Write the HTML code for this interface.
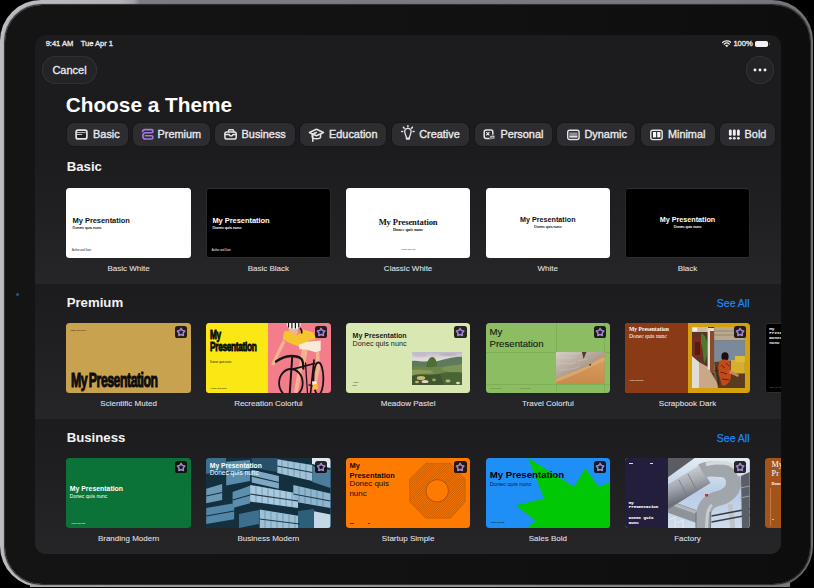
<!DOCTYPE html>
<html><head><meta charset="utf-8">
<style>
*{margin:0;padding:0;box-sizing:border-box}
html,body{width:814px;height:588px;overflow:hidden;background:#000}
body{position:relative;font-family:"Liberation Sans",sans-serif;color:#fff}
.a{position:absolute}
.t{position:absolute;line-height:1;white-space:nowrap}
#frame{left:0.3px;top:0.3px;width:813px;height:586.5px;border-radius:41px;background:linear-gradient(90deg,#bcbcc1 0px,#b4b4b9 120px,#a0a0a5 134px,#7c7c82 140px,#78787e 700px,#727277 100%)}
#bezel{left:4.6px;top:4.6px;width:805px;height:579.7px;border-radius:37px;background:linear-gradient(90deg,#141414,#111 60%,#0d0d0d);box-shadow:0 0 1px 0.6px #2a2a2a}
#screen{left:34.5px;top:35px;width:746.5px;height:519px;border-radius:11px;background:#1c1c1e;overflow:hidden}
.sec{position:absolute;left:0;width:100%;height:135px;background:linear-gradient(180deg,#1c1c1e 0%,#1f1f21 40%,#262628 100%)}
.chip{position:absolute;top:88px;height:22.8px;border-radius:7px;background:#2d2d31;box-shadow:0 0 1px 1px rgba(0,0,0,0.18)}
.ct{font-size:10.9px;font-weight:400;color:#e8e8ea;top:93.6px;-webkit-text-stroke:0.35px #e8e8ea}
.hd{font-size:13.2px;font-weight:700;color:#f2f2f2}
.card{position:absolute;width:124.4px;height:70px;border-radius:3.5px;overflow:hidden}
.lbl{position:absolute;width:140px;text-align:center;font-size:8px;line-height:1;color:#dedee0;white-space:nowrap;-webkit-text-stroke:0.12px #dedee0}
.badge{position:absolute;left:108.5px;top:3.5px;width:12.2px;height:12.2px;border-radius:2.6px;background:rgba(12,10,8,0.88)}
.badge svg{position:absolute;left:0;top:0}
.cond{font-weight:700;transform-origin:0 0}
.see{font-size:10.5px;color:#1a86f5;-webkit-text-stroke:0.25px #1a86f5}
</style></head><body>
<div id="frame" class="a"></div>
<div class="a" style="left:30px;top:583px;width:760px;height:3.6px;background:linear-gradient(90deg,#a8a8ad,#96969b 60%,#7a7a7f)"></div>
<div id="bezel" class="a"></div>
<div class="a" style="left:16px;top:292.5px;width:3px;height:3px;border-radius:50%;background:#2a4f8a"></div>
<div id="screen" class="a">
  <!-- sections -->
  <div class="sec" style="top:114.4px"></div>
  <div class="sec" style="top:249.4px"></div>
  <div class="sec" style="top:384.3px"></div>

  <!-- status bar -->
  <div class="t" style="left:11.2px;top:4.5px;font-size:7.6px;font-weight:400;color:#ececec;-webkit-text-stroke:0.3px #ececec;letter-spacing:-0.05px">9:41 AM</div>
  <div class="t" style="left:46.3px;top:4.5px;font-size:7.6px;font-weight:400;color:#ececec;-webkit-text-stroke:0.3px #ececec;letter-spacing:-0.05px">Tue Apr 1</div>
  <div class="t" style="left:698.9px;top:4.5px;font-size:7.6px;font-weight:400;color:#ececec;-webkit-text-stroke:0.3px #ececec;letter-spacing:-0.05px">100%</div>
  <svg class="a" style="left:687.3px;top:5.2px" width="9.5" height="7.2" viewBox="0 0 9.5 7.2">
    <path d="M0.5 2.5 A6.3 6.3 0 0 1 9 2.5" stroke="#eee" stroke-width="1.2" fill="none" stroke-linecap="round"/>
    <path d="M2.1 4.2 A3.9 3.9 0 0 1 7.4 4.2" stroke="#eee" stroke-width="1.2" fill="none" stroke-linecap="round"/>
    <path d="M3.4 5.6 A1.9 1.9 0 0 1 6.1 5.6 L4.75 7 Z" fill="#eee" stroke="#eee" stroke-width="0.5" stroke-linejoin="round"/>
  </svg>
  <div class="a" style="left:720.3px;top:5.7px;width:13.2px;height:6px;border-radius:1.8px;background:#f2f2f2"></div>
  <div class="a" style="left:734.2px;top:7.5px;width:1.3px;height:2.4px;border-radius:0 1px 1px 0;background:#777"></div>
  <!-- cancel -->
  <div class="a" style="left:7.5px;top:21px;width:55px;height:28px;border-radius:14px;background:#242426;box-shadow:inset 0 0 0 0.8px #343437"></div>
  <div class="t" style="left:17.9px;top:29.9px;font-size:11px;color:#ebebed;-webkit-text-stroke:0.3px #ebebed">Cancel</div>
  <!-- more -->
  <div class="a" style="left:711.2px;top:20.8px;width:28px;height:28px;border-radius:50%;background:#242426;box-shadow:inset 0 0 0 0.8px #343437"></div>
  <svg class="a" style="left:711.2px;top:20.8px" width="28" height="28" viewBox="0 0 28 28"><circle cx="9" cy="14" r="1.45" fill="#f2f2f2"/><circle cx="14" cy="14" r="1.45" fill="#f2f2f2"/><circle cx="19" cy="14" r="1.45" fill="#f2f2f2"/></svg>
  <!-- title -->
  <div class="t" style="left:31.2px;top:59.5px;font-size:20.8px;font-weight:700;color:#fff">Choose a Theme</div>
  <!-- chips -->
  <div class="chip" style="left:32.5px;width:60.7px"></div>
  <div class="chip" style="left:98.7px;width:76.7px"></div>
  <div class="chip" style="left:180.5px;width:79.6px"></div>
  <div class="chip" style="left:265.7px;width:86.3px"></div>
  <div class="chip" style="left:357.3px;width:76.9px"></div>
  <div class="chip" style="left:440.2px;width:77.1px"></div>
  <div class="chip" style="left:522.8px;width:77.8px"></div>
  <div class="chip" style="left:606.5px;width:73.5px"></div>
  <div class="chip" style="left:685.5px;width:54.6px"></div>
  <div id="chiptext">
  <div class="t ct" style="left:58.6px">Basic</div>
  <div class="t ct" style="left:123.1px">Premium</div>
  <div class="t ct" style="left:207.1px">Business</div>
  <div class="t ct" style="left:294.5px">Education</div>
  <div class="t ct" style="left:384.7px">Creative</div>
  <div class="t ct" style="left:465.9px">Personal</div>
  <div class="t ct" style="left:550px">Dynamic</div>
  <div class="t ct" style="left:633.4px">Minimal</div>
  <div class="t ct" style="left:710.1px">Bold</div>
  </div>
  <!-- headers -->
  <div class="t hd" style="left:32.2px;top:125.3px">Basic</div>
  <div class="t hd" style="left:32.2px;top:260.5px">Premium</div>
  <div class="t hd" style="left:32.2px;top:395.5px">Business</div>
  <div class="t see" style="left:682.3px;top:263px">See All</div>
  <div class="t see" style="left:682.3px;top:398px">See All</div>
  <!-- cards -->
  <!-- Basic row -->
  <div class="card" style="left:31.9px;top:152.7px;background:#fff;color:#111">
    <div class="t" style="left:6.2px;top:29px;font-size:7.5px;font-weight:700;letter-spacing:-0.05px">My Presentation</div>
    <div class="t" style="left:6.2px;top:38.8px;font-size:3.9px;-webkit-text-stroke:0.1px currentColor">Donec quis nunc</div>
    <div class="t" style="left:5.6px;top:61.9px;font-size:2.6px">Author and Date</div>
  </div>
  <div class="card" style="left:171.7px;top:152.7px;background:#000;color:#fff;box-shadow:inset 0 0 0 0.9px #2f2f31">
    <div class="t" style="left:6.2px;top:29px;font-size:7.5px;font-weight:700;letter-spacing:-0.05px">My Presentation</div>
    <div class="t" style="left:6.2px;top:38.8px;font-size:3.9px;-webkit-text-stroke:0.1px currentColor">Donec quis nunc</div>
    <div class="t" style="left:5.6px;top:61.9px;font-size:2.6px">Author and Date</div>
  </div>
  <div class="card" style="left:311.4px;top:152.7px;background:#fff;color:#111;font-family:'Liberation Serif',serif">
    <div class="t" style="left:0;width:124.4px;text-align:center;top:30.7px;font-size:8.56px;font-weight:700;letter-spacing:-0.1px">My Presentation</div>
    <div class="t" style="left:0;width:124.4px;text-align:center;top:39.9px;font-size:4.3px;font-weight:700">Donec quis nunc</div>
    <div class="t" style="left:0;width:124.4px;text-align:center;top:61.5px;font-size:2.4px">Author and Date</div>
  </div>
  <div class="card" style="left:451.1px;top:152.7px;background:#fff;color:#111">
    <div class="t" style="left:0;width:124.4px;text-align:center;top:28.3px;font-size:7.2px;font-weight:700">My Presentation</div>
    <div class="t" style="left:0;width:124.4px;text-align:center;top:38px;font-size:3.7px;-webkit-text-stroke:0.1px currentColor">Donec quis nunc</div>
  </div>
  <div class="card" style="left:590.8px;top:152.7px;background:#000;color:#fff;box-shadow:inset 0 0 0 0.9px #2f2f31">
    <div class="t" style="left:0;width:124.4px;text-align:center;top:28.3px;font-size:7.2px;font-weight:700">My Presentation</div>
    <div class="t" style="left:0;width:124.4px;text-align:center;top:38px;font-size:3.7px;-webkit-text-stroke:0.1px currentColor">Donec quis nunc</div>
  </div>

  <!-- Premium row -->
  <div class="card" style="left:31.9px;top:287.7px;background:#c9a24f;color:#111">
    <div class="t" style="left:4.3px;top:6.2px;font-size:2.1px">Name goes here</div>
    <div class="t cond" style="left:4.4px;top:47.6px;font-size:20.5px;letter-spacing:-0.8px;word-spacing:-2px;transform:scaleX(0.6);-webkit-text-stroke:1.1px #0d0d0d;color:#0d0d0d">My Presentation</div>
    <div class="badge"><svg width="12.2" height="12.2" viewBox="0 0 12.2 12.2"><path d="M6.10 2.40 L7.42 4.48 L9.81 5.09 L8.24 7.00 L8.39 9.46 L6.10 8.55 L3.81 9.46 L3.96 7.00 L2.39 5.09 L4.78 4.48 Z" fill="none" stroke="#9f86d2" stroke-width="1.5" stroke-linejoin="round"/></svg></div>
  </div>
  <div class="card" style="left:171.7px;top:287.7px;background:#f47d8c;color:#111">
    <div class="a" style="left:0;top:0;width:61.7px;height:70px;background:#fae714"></div>
    <svg class="a" id="cyclist" style="left:61.7px;top:0" width="62.7" height="70" viewBox="0 0 62.7 70">
<g stroke-linecap="round" stroke-linejoin="round" fill="none" stroke="#f2b391">
 <path d="M16.7 17 Q11 28 5.5 40" stroke-width="3.3"/>
 <path d="M39.5 17.5 Q38 30 35.3 43" stroke-width="3.1"/>
 <path d="M36 26 L33 41.7 L28 68" stroke-width="3.8"/>
 <path d="M49.5 27.5 L50.2 45.5 L46.8 61" stroke-width="3.6"/>
</g>
<circle cx="5.2" cy="40.5" r="1.8" fill="#f2b391"/>
<path d="M20.4 5 L30.4 5 L29.5 11 Q25.5 14 21.5 11 Z" fill="#f2b391"/>
<path d="M16.7 8.2 Q20 7 22.9 9.5 Q26.5 13 30.4 11.5 Q33 8 35.3 6.4 L45.2 9.2 Q47 12 47.3 17 L39.5 18.3 L38 21.9 L29.1 23.1 L19.2 19 L15 17.2 Q15 11 16.7 8.2 Z" fill="#f6c42c"/>
<path d="M15 17.2 L19.2 19 M39.5 18.3 L47.3 17" stroke="#f07d8e" stroke-width="0.9"/>
<path d="M30.4 21.9 L39 18.8 L52.7 17.5 L52.7 27.5 L47.7 29.3 L39 26.8 L31.6 26.2 Z" fill="#f7ebd7"/>
<ellipse cx="25.7" cy="1.8" rx="7.1" ry="4.4" fill="#f4f4f4"/>
<path d="M20.5 -2 V4.5 M23.9 -2.5 V5.6 M27.4 -2.5 V5.6 M30.8 -2 V4.5" stroke="#111" stroke-width="1.2"/>
<path d="M32 5 Q34.5 7.5 33.5 10.5" stroke="#111" stroke-width="1.6" fill="none"/>
<g stroke="#151515" fill="none" stroke-linecap="round" stroke-linejoin="round">
 <path d="M8 38.5 Q15 33.5 22.9 33 Q30 32.8 33.5 36 Q35.5 39 35.3 45.5" stroke-width="2.3"/>
 <path d="M24.2 34.3 L21.7 71" stroke-width="2"/>
 <ellipse cx="22.9" cy="60" rx="11.8" ry="14" stroke-width="1.8"/>
 <path d="M22.9 46.7 L46.5 40.5" stroke-width="1.8"/>
 <path d="M46 37 L42.5 71" stroke-width="1.7"/>
 <ellipse cx="50.4" cy="55.5" rx="5" ry="16" stroke-width="1.8"/>
 <path d="M37.5 40 L39.5 70 M41 62 L48 64" stroke-width="1.3"/>
</g>
<path d="M44.5 61 L49.5 59.5 L50 66 L45 67 Z" fill="#f6c42c"/>
<path d="M44 58.5 L48.5 58 L48.5 61 L44.5 61.5 Z" fill="#f4f4f4"/>
</svg>
    <div class="t cond" style="left:3.9px;top:4.9px;font-size:13.5px;letter-spacing:-0.5px;transform:scaleX(0.615);-webkit-text-stroke:0.9px #0a0a0a;color:#0a0a0a">My</div>
    <div class="t cond" style="left:3.9px;top:17.5px;font-size:13.5px;letter-spacing:-0.5px;transform:scaleX(0.615);-webkit-text-stroke:0.9px #0a0a0a;color:#0a0a0a">Presentation</div>
    <div class="t" style="left:3.9px;top:38.2px;font-size:2.9px">Donec quis nunc</div>
    <div class="t" style="left:3.9px;top:64px;font-size:2.3px">Author and Date</div>
    <div class="badge"><svg width="12.2" height="12.2" viewBox="0 0 12.2 12.2"><path d="M6.10 2.40 L7.42 4.48 L9.81 5.09 L8.24 7.00 L8.39 9.46 L6.10 8.55 L3.81 9.46 L3.96 7.00 L2.39 5.09 L4.78 4.48 Z" fill="none" stroke="#9f86d2" stroke-width="1.5" stroke-linejoin="round"/></svg></div>
  </div>
  <div class="card" style="left:311.4px;top:287.7px;background:#d9e8b2;color:#1a1a1a">
    <div class="t" style="left:6.7px;top:9.1px;font-size:7px;font-weight:700">My Presentation</div>
    <div class="t" style="left:6.7px;top:17.7px;font-size:7.25px">Donec quis nunc</div>
    <div class="t" style="left:6.7px;top:58.5px;font-size:2px;line-height:1.2">Author<br>Date</div>
    <svg class="a" id="meadow" style="left:66.3px;top:29.3px" width="50.3" height="33.2" viewBox="0 0 50.3 33.2">
<defs><linearGradient id="msky" x1="0" y1="0" x2="0" y2="1"><stop offset="0" stop-color="#bdb8cc"/><stop offset="0.6" stop-color="#e2dcd8"/><stop offset="1" stop-color="#d8d8c8"/></linearGradient></defs>
<rect width="50.3" height="33.2" fill="#5f7a45"/>
<rect width="50.3" height="12" fill="url(#msky)"/>
<ellipse cx="8" cy="3" rx="7" ry="1.6" fill="#c8b8c8"/>
<ellipse cx="36" cy="2.5" rx="9" ry="1.5" fill="#b8b4c8"/>
<path d="M0 9 C5 8 9 10 14 9.5 C18 9 22 10 26 9 C32 7 38 6 44 5 C47 4.5 49 5 50.3 4.5 V18 H0 Z" fill="#5d7a5c"/>
<path d="M14 18 C14 12 16 6 20 5 C24 5 25 10 25 18 Z" fill="#4f6e36"/>
<path d="M0 15 C6 13 12 16 20 15 C28 14 36 16 50.3 13 V33.2 H0 Z" fill="#6c8648"/>
<path d="M0 18 C8 17 14 19 18 18 L22 21 C14 22 8 21 0 23 Z" fill="#8a9a5a"/>
<path d="M30 16 C36 13 42 14 50.3 12 V20 C44 22 36 20 30 18 Z" fill="#7a9556"/>
<path d="M0 24 C8 21 16 24 26 22 C34 20 42 24 50.3 22 V33.2 H0 Z" fill="#3f5630"/>
<path d="M28 22 C34 19 40 21 46 20 L50.3 21 V33.2 H32 Z" fill="#4a6434"/>
<ellipse cx="9" cy="26" rx="4.2" ry="2" fill="#d2b868"/>
<ellipse cx="13" cy="29.5" rx="3.5" ry="1.6" fill="#e0d8c0"/>
<ellipse cx="5" cy="30" rx="2" ry="1.2" fill="#c0b070"/>
<ellipse cx="22" cy="28" rx="2" ry="1.4" fill="#9aa068"/>
<ellipse cx="36" cy="29" rx="2.5" ry="1.4" fill="#b8b890"/>
<ellipse cx="46" cy="31" rx="2" ry="1.2" fill="#d8d8c0"/>
</svg>
    <div class="badge"><svg width="12.2" height="12.2" viewBox="0 0 12.2 12.2"><path d="M6.10 2.40 L7.42 4.48 L9.81 5.09 L8.24 7.00 L8.39 9.46 L6.10 8.55 L3.81 9.46 L3.96 7.00 L2.39 5.09 L4.78 4.48 Z" fill="none" stroke="#9f86d2" stroke-width="1.5" stroke-linejoin="round"/></svg></div>
  </div>
  <div class="card" style="left:451.1px;top:287.7px;background:#8cbd63;color:#141c10">
    <div class="a" style="left:70.4px;top:0;width:0.8px;height:70px;background:#7dae58"></div>
    <div class="a" style="left:118.9px;top:0;width:0.8px;height:70px;background:#7dae58"></div>
    <div class="a" style="left:0;top:28.9px;width:124.4px;height:0.8px;background:#7dae58"></div>
    <div class="a" style="left:0;top:61.2px;width:124.4px;height:0.8px;background:#7dae58"></div>
    <div class="t" style="left:3.9px;top:4px;font-size:9.65px;-webkit-text-stroke:0.12px #141c10">My</div>
    <div class="t" style="left:3.9px;top:16px;font-size:9.65px;-webkit-text-stroke:0.12px #141c10">Presentation</div>
    <div class="t" style="left:5px;top:64px;font-size:2.2px;color:#4d6a3a">000 000 00</div>
    <div class="t" style="left:34px;top:64px;font-size:2.2px;color:#4d6a3a">0000 00 00</div>
    <svg class="a" id="dunes" style="left:70.9px;top:29.3px" width="48.5" height="32.3" viewBox="0 0 48.5 32.3">
<defs><linearGradient id="dg" x1="0" y1="0" x2="1" y2="1"><stop offset="0" stop-color="#d6cec6"/><stop offset="0.6" stop-color="#a8988a"/><stop offset="1" stop-color="#8a7464"/></linearGradient>
<linearGradient id="ds" x1="0" y1="0" x2="0" y2="1"><stop offset="0" stop-color="#dba064"/><stop offset="1" stop-color="#c98a4c"/></linearGradient></defs>
<rect width="48.5" height="32.3" fill="url(#ds)"/>
<path d="M0 0 H48.5 V4.5 C42 6 38 9 34 13 C26 17 14 21 0 27 Z" fill="url(#dg)"/>
<g stroke="#e8e2da" stroke-width="0.5" opacity="0.6" fill="none">
<path d="M2 6 C8 4 12 8 18 5 M1 12 C7 10 12 14 20 10 M3 19 C9 16 16 19 24 14 M10 2 C14 1 20 3 24 1 M22 9 C26 7 30 9 32 6"/>
</g>
<path d="M26 0 L27.5 7 L30.5 0 Z" fill="#4a3c30"/>
<path d="M0 27 C14 21 26 17 34 13 C38 10 43 7 48.5 5.5 V9 C40 12 30 19 0 30 Z" fill="#e2aa70" opacity="0.8"/>
<circle cx="34.2" cy="12.8" r="0.9" fill="#3a2a1a"/>
</svg>
    <div class="badge"><svg width="12.2" height="12.2" viewBox="0 0 12.2 12.2"><path d="M6.10 2.40 L7.42 4.48 L9.81 5.09 L8.24 7.00 L8.39 9.46 L6.10 8.55 L3.81 9.46 L3.96 7.00 L2.39 5.09 L4.78 4.48 Z" fill="none" stroke="#9f86d2" stroke-width="1.5" stroke-linejoin="round"/></svg></div>
  </div>
  <div class="card" style="left:590.8px;top:287.7px;background:#d5a00d;color:#fff">
    <div class="a" style="left:0;top:0;width:62.6px;height:70px;background:#8a3a15"></div>
    <div class="t" style="left:3.7px;top:4.6px;font-size:5.66px;font-weight:700;font-family:'Liberation Serif',serif">My Presentation</div>
    <div class="t" style="left:3.7px;top:11.4px;font-size:5.65px;font-family:'Liberation Serif',serif">Donec quis nunc</div>
    <div class="t" style="left:3.7px;top:56.8px;font-size:2px">Author and Date</div>
    <svg class="a" id="scrap" style="left:66.7px;top:4.3px" width="52.9" height="61" viewBox="0 0 52.9 61">
<rect width="52.9" height="61" fill="#6c5a48"/>
<rect x="0" y="0" width="22.3" height="61" fill="#5a3424"/>
<rect x="0" y="0" width="16" height="5" fill="#cdbca4"/>
<rect x="0.3" y="0.5" width="5" height="4" fill="#f0ece4"/>
<path d="M1 30 V14 C1 10 4 9.5 5.5 9.5 C7 9.5 10 10 10 14 V30 Z" fill="#7e2a1a"/>
<path d="M3 28 V15 H8 V28 Z" fill="#5a1a10"/>
<path d="M9 6 C14 8 16 14 15.5 24 C15 30 14 34 12 36 C11 30 11 22 9 16 Z" fill="#4d7a32"/>
<path d="M0 29 L7 35 V61 H0 Z" fill="#e2dcd6"/>
<path d="M7 35 L16 40 L28 61 H7 Z" fill="#c9a888"/>
<path d="M15.6 1 H22.3 V46 L15.6 42 Z" fill="#e6ded2"/>
<path d="M18 4 H22.3 V46 L18 44 Z" fill="#8a4a30"/>
<rect x="22.3" y="0" width="30.6" height="13.4" fill="#b9a98e"/>
<path d="M22.3 4 H52.9 M22.3 8 H52.9" stroke="#8e7e68" stroke-width="0.8"/>
<rect x="22.3" y="13.4" width="30.6" height="22" fill="#7b8a9b"/>
<path d="M22.3 35 L52.9 33 V61 H26 Z" fill="#5a3a22"/>
<rect x="38.9" y="33" width="14" height="13.5" fill="#d6af2e"/>
<rect x="43" y="29" width="9.9" height="6" fill="#e0bb3a"/>
<path d="M24 40 L27 58 M22.5 44 L36 42" stroke="#3a2414" stroke-width="1.2"/>
<ellipse cx="33" cy="29.5" rx="3.6" ry="4.3" fill="#1a0f0c"/>
<path d="M28 34 C31 31.5 36 32 38 35 L39 50 C38 56 34 59 30 58.5 L27 48 C26 41 26 37 28 34 Z" fill="#c24a18"/>
<path d="M29 38 L33 41 M28.5 45 L35 47 M30 52 L37 53 M34 36 L37 39" stroke="#6a2010" stroke-width="1"/>
<path d="M38 43 L47 48 L46 50 L37 46 Z" fill="#c78a60"/>
</svg>
    <div class="badge"><svg width="12.2" height="12.2" viewBox="0 0 12.2 12.2"><path d="M6.10 2.40 L7.42 4.48 L9.81 5.09 L8.24 7.00 L8.39 9.46 L6.10 8.55 L3.81 9.46 L3.96 7.00 L2.39 5.09 L4.78 4.48 Z" fill="none" stroke="#9f86d2" stroke-width="1.5" stroke-linejoin="round"/></svg></div>
  </div>
  <div class="card" style="left:730.7px;top:287.7px;background:#000;box-shadow:inset 0 0 0 0.9px #2f2f31;color:#fff;font-family:'Liberation Mono',monospace">
    <div class="t" style="left:4.1px;top:3.9px;font-size:4.3px;font-weight:700;line-height:4.9px">My<br>Presentation<br>Donec quis<br>nunc</div>
    <div class="t" style="left:4.1px;top:64.5px;font-size:2px;color:#999">0000 00 00</div>
  </div>

  <!-- Business row -->
  <div class="card" style="left:31.9px;top:422.7px;background:#0b7338;color:#fff">
    <div class="t" style="left:3.4px;top:28.3px;font-size:6.9px;font-weight:700">My Presentation</div>
    <div class="t" style="left:3.4px;top:35.9px;font-size:5.06px">Donec quis nunc</div>
    <div class="t" style="left:4.5px;top:64.5px;font-size:2px">Author and Date</div>
    <div class="badge"><svg width="12.2" height="12.2" viewBox="0 0 12.2 12.2"><path d="M6.10 2.40 L7.42 4.48 L9.81 5.09 L8.24 7.00 L8.39 9.46 L6.10 8.55 L3.81 9.46 L3.96 7.00 L2.39 5.09 L4.78 4.48 Z" fill="none" stroke="#9f86d2" stroke-width="1.5" stroke-linejoin="round"/></svg></div>
  </div>
  <div class="card" style="left:171.7px;top:422.7px;background:#2f5a78;color:#fff">
    <svg class="a" id="bldg" style="left:0;top:0" width="124.4" height="70" viewBox="0 0 124.4 70">
<rect width="124.4" height="70" fill="#14303f"/>
<path d="M20.2 3.7 L44.1 2.1 L44.1 22.9 L20.2 27.6 Z" fill="#5a8cab"/>
<path d="M0 0 H20 V12 L0 16 Z" fill="#3f6f8e"/>
<path d="M45.7 0 H71 V14 L45.7 10 Z" fill="#28506a"/>
<path d="M45.7 11.7 L72.9 18.1 L72.9 30.8 L45.7 24.5 Z" fill="#7fa9c4"/>
<path d="M71.3 1.3 L106.4 6.9 L106.4 22.9 L71.3 14.9 Z" fill="#9ec2d8"/>
<path d="M0.2 30.8 L16.2 26 L16.2 42 L0.2 45.2 Z" fill="#6b9ab6"/>
<path d="M26.6 34 L44.1 27.7 L44.1 45.2 L26.6 50 Z" fill="#5f8fae"/>
<path d="M44.1 26.9 L92.1 35.6 L92.1 50 L44.1 43.6 Z" fill="#a9cbe0"/>
<path d="M87.3 26.9 L124.4 35.6 L124.4 50 L87.3 43.6 Z" fill="#8fb7cf"/>
<path d="M106.4 8 L124.4 12 V30 L106.4 24 Z" fill="#4d7d9c"/>
<path d="M106 0 H124.4 V10 L106 6 Z" fill="#dfe8f0"/>
<path d="M0.2 50 L28.2 45.2 L28.2 61.2 L0.2 66 Z" fill="#5587a8"/>
<path d="M53.7 51.6 L93.6 58 L93.6 70 L53.7 70 Z" fill="#9cc1d8"/>
<path d="M33 56 L53 52 V66 L33 70 Z" fill="#3f6f8e"/>
<path d="M108 53.2 L124.4 56.4 V70 H108 Z" fill="#c3d9e8"/>
<path d="M92 53 L108 51 V70 H92 Z" fill="#2e5e7c"/>
<g stroke="#0c2230" stroke-width="1.2" opacity="0.85">
<path d="M0.2 38 L16.2 34.5 M26.6 42 L44.1 37 M44.1 36 L92.1 43 M87.3 36 L124.4 43 M45.7 18 L72.9 24.5 M71.3 8 L106.4 14.5 M20.2 15 L44.1 12 M0.2 58 L28.2 53 M53.7 61 L93.6 66"/>
</g>
<g stroke="#2a4c60" stroke-width="0.5" opacity="0.7">
<path d="M50 27.8 V44.4 M56 28.9 V45.2 M62 30 V46 M68 31.1 V46.8 M74 32.2 V47.6 M80 33.3 V48.4 M86 34.4 V49.2"/>
<path d="M76 2 V15.8 M82 3 V17.2 M88 4 V18.6 M94 5 V20 M100 6 V21.4"/>
<path d="M59 53 V70 M65 54 V70 M71 55 V70 M77 56 V70 M83 57 V70 M89 58 V70"/>
<path d="M93 28 V44 M99 29.5 V45 M105 31 V46 M111 32.5 V47 M117 34 V48"/>
</g>
</svg>
    <div class="t" style="left:3.6px;top:5.3px;font-size:6.74px;font-weight:700">My Presentation</div>
    <div class="t" style="left:3.6px;top:12.8px;font-size:6.58px">Donec quis nunc</div>
    <div class="badge"><svg width="12.2" height="12.2" viewBox="0 0 12.2 12.2"><path d="M6.10 2.40 L7.42 4.48 L9.81 5.09 L8.24 7.00 L8.39 9.46 L6.10 8.55 L3.81 9.46 L3.96 7.00 L2.39 5.09 L4.78 4.48 Z" fill="none" stroke="#9f86d2" stroke-width="1.5" stroke-linejoin="round"/></svg></div>
  </div>
  <div class="card" style="left:311.4px;top:422.7px;background:#ff7b00;color:#160a00">
    <svg class="a" id="octa" style="left:0;top:0" width="124.4" height="70" viewBox="0 0 124.4 70">
<defs><pattern id="hatch" width="1.6" height="1.6" patternUnits="userSpaceOnUse" patternTransform="rotate(45)"><rect width="1.6" height="1.6" fill="#f77600"/><rect width="0.55" height="1.6" fill="#b85200"/></pattern></defs>
<path d="M79.8 5.2 L104.3 5.2 L119.2 21 L119.2 43.9 L104.3 60.2 L79.8 60.2 L63.7 43.9 L63.7 21 Z" fill="url(#hatch)" stroke="#a84a00" stroke-width="0.6" stroke-dasharray="0.8 0.5"/>
<circle cx="91.2" cy="32.8" r="11.2" fill="#ff7b00" stroke="#8a3a00" stroke-width="0.6"/>
</svg>
    <div class="t" style="left:3.6px;top:4.45px;font-size:7.5px;font-weight:700">My</div>
    <div class="t" style="left:3.6px;top:13.95px;font-size:7.5px;font-weight:700">Presentation</div>
    <div class="t" style="left:3.6px;top:22.7px;font-size:7.9px">Donec quis</div>
    <div class="t" style="left:3.6px;top:32.2px;font-size:7.9px">nunc</div>
    <div class="a" style="left:4.5px;top:65.2px;width:3.5px;height:0.5px;background:#7a3a00"></div>
    <div class="a" style="left:22.5px;top:65.2px;width:2px;height:0.5px;background:#7a3a00"></div>
    <div class="badge"><svg width="12.2" height="12.2" viewBox="0 0 12.2 12.2"><path d="M6.10 2.40 L7.42 4.48 L9.81 5.09 L8.24 7.00 L8.39 9.46 L6.10 8.55 L3.81 9.46 L3.96 7.00 L2.39 5.09 L4.78 4.48 Z" fill="none" stroke="#9f86d2" stroke-width="1.5" stroke-linejoin="round"/></svg></div>
  </div>
  <div class="card" style="left:451.1px;top:422.7px;background:#1f8ff8;color:#000">
    <svg class="a" style="left:0;top:0" width="124.4" height="70" viewBox="0 0 124.4 70"><path d="M42.1 0 L88.1 28.7 L99.2 10.3 L112.7 28.7 L124.4 24.1 L124.4 70 L40.8 70 L49.4 62.8 L29.6 47.3 L58 40.4 Z" fill="#00c805"/></svg>
    <div class="t" style="left:4.2px;top:12.1px;font-size:9.64px;font-weight:700">My Presentation</div>
    <div class="t" style="left:4.2px;top:24.2px;font-size:5.6px;color:#0a1a40">Donec quis nunc</div>
    <div class="t" style="left:4.5px;top:63.8px;font-size:2px">Author and Date</div>
    <div class="badge"><svg width="12.2" height="12.2" viewBox="0 0 12.2 12.2"><path d="M6.10 2.40 L7.42 4.48 L9.81 5.09 L8.24 7.00 L8.39 9.46 L6.10 8.55 L3.81 9.46 L3.96 7.00 L2.39 5.09 L4.78 4.48 Z" fill="none" stroke="#9f86d2" stroke-width="1.5" stroke-linejoin="round"/></svg></div>
  </div>
  <div class="card" style="left:590.8px;top:422.7px;background:#8d98a8;color:#fff">
    <svg class="a" id="factory" style="left:42.7px;top:0" width="81.7" height="70" viewBox="0 0 81.7 70">
<defs>
<linearGradient id="fsky" x1="0" y1="0" x2="0" y2="1"><stop offset="0" stop-color="#e4ecf4"/><stop offset="0.5" stop-color="#b9cde6"/><stop offset="1" stop-color="#cfdcec"/></linearGradient>
<linearGradient id="p1" x1="0" y1="0" x2="0.5" y2="1"><stop offset="0" stop-color="#d2d5da"/><stop offset="0.5" stop-color="#a6aab1"/><stop offset="1" stop-color="#6d7179"/></linearGradient>
</defs>
<rect width="81.7" height="70" fill="url(#fsky)"/>
<path d="M-1 -1 H28 L-1 20 Z" fill="#5b5d63"/>
<path d="M-1 48 L30 59" stroke="#8e9299" stroke-width="12" fill="none"/>
<path d="M-1 44 L30 55" stroke="#b4b8be" stroke-width="3" fill="none"/>
<path d="M37 16 L-5 42" stroke="url(#p1)" stroke-width="21" fill="none"/>
<path d="M20 16 L28 31 M11 22 L18 36" stroke="#7a7e86" stroke-width="0.9" fill="none"/>
<path d="M34 13 C40 9.5 47 11.5 54 11.5 C62 12 66 19 65.5 26 C65 34 57 39 50 40.5 C43 42 37 47 36 55 L35.5 71" stroke="#a1a5ac" stroke-width="15" fill="none"/>
<path d="M38 6.5 C45 4 50 5 56 5 C64 5.5 70 11 71.5 18" stroke="#d6d9de" stroke-width="3.5" fill="none"/>
<path d="M44 47 C40 50 39 55 38.5 71" stroke="#c8cbd0" stroke-width="3" fill="none"/>
<path d="M28 54 V71 M42.3 54 V71" stroke="#6f737b" stroke-width="1" fill="none"/>
<path d="M62 46 L65 71" stroke="#c0c4ca" stroke-width="5" fill="none"/>
<path d="M43.5 58 L82 50.7 M43.5 64 L82 56.8" stroke="#3a3d44" stroke-width="1.6" fill="none"/>
<path d="M73 18 L81.7 14 V71 H74 Z" fill="#5a5e66"/>
<path d="M72 30 L81.7 28 M72 40 L81.7 38" stroke="#9aa0a8" stroke-width="1" fill="none"/>
<path d="M1 62 L7 59 V71 M9 65 L15 62 V71" stroke="#eef0f4" stroke-width="0.8" fill="none"/>
<rect x="37" y="36" width="3.2" height="2.5" fill="#d8283a"/>
</svg>
    <div class="a" style="left:0;top:0;width:42.7px;height:70px;background:#231e3c"></div>
    <div class="a" style="left:3.7px;top:5.3px;width:4.3px;height:0.6px;background:#ddd"></div>
    <div class="a" style="left:24.5px;top:5.3px;width:3px;height:0.6px;background:#ddd"></div>
    <div class="t" style="left:3.5px;top:43.3px;font-size:4.1px;font-weight:700;color:#fff;-webkit-text-stroke:0.1px #fff;font-family:'Liberation Mono',monospace;line-height:1.1">My<br>Presentation</div>
    <div class="t" style="left:3.5px;top:58.6px;font-size:4.1px;font-weight:700;color:#fff;-webkit-text-stroke:0.1px #fff;font-family:'Liberation Mono',monospace;line-height:1.1">Donec Quis<br>Nunc</div>
    <div class="badge"><svg width="12.2" height="12.2" viewBox="0 0 12.2 12.2"><path d="M6.10 2.40 L7.42 4.48 L9.81 5.09 L8.24 7.00 L8.39 9.46 L6.10 8.55 L3.81 9.46 L3.96 7.00 L2.39 5.09 L4.78 4.48 Z" fill="none" stroke="#9f86d2" stroke-width="1.5" stroke-linejoin="round"/></svg></div>
  </div>
  <div class="card" style="left:730.7px;top:422.7px;background:#a4541b;color:#fff;font-family:'Liberation Serif',serif">
    <div class="a" style="left:4.4px;top:30px;width:0.5px;height:38px;background:#c07a45"></div>
    <div class="t" style="left:6.4px;top:3.3px;font-size:8.2px;line-height:8.9px">My<br>Pr</div>
    <div class="t" style="left:6.4px;top:24px;font-size:4px;font-weight:700">Donec</div>
    <div class="a" style="left:6.5px;top:61px;width:2.5px;height:0.6px;background:#e0b090"></div>
  </div>
  <!-- labels -->
  <div class="lbl" style="left:24.1px;top:230px">Basic White</div>
  <div class="lbl" style="left:163.9px;top:230px">Basic Black</div>
  <div class="lbl" style="left:303.6px;top:230px">Classic White</div>
  <div class="lbl" style="left:443.3px;top:230px">White</div>
  <div class="lbl" style="left:583px;top:230px">Black</div>
  <div class="lbl" style="left:24.1px;top:365px">Scientific Muted</div>
  <div class="lbl" style="left:163.9px;top:365px">Recreation Colorful</div>
  <div class="lbl" style="left:303.6px;top:365px">Meadow Pastel</div>
  <div class="lbl" style="left:443.3px;top:365px">Travel Colorful</div>
  <div class="lbl" style="left:583px;top:365px">Scrapbook Dark</div>
  <div class="lbl" style="left:24.1px;top:500px">Branding Modern</div>
  <div class="lbl" style="left:163.9px;top:500px">Business Modern</div>
  <div class="lbl" style="left:303.6px;top:500px">Startup Simple</div>
  <div class="lbl" style="left:443.3px;top:500px">Sales Bold</div>
  <div class="lbl" style="left:583px;top:500px">Factory</div>
</div>

<svg class="a" style="left:0;top:0" width="814" height="588" viewBox="0 0 814 588" fill="none" stroke-linecap="round" stroke-linejoin="round">
 <!-- basic -->
 <g transform="translate(75,129)" stroke="#e4e4e6">
  <rect x="1.1" y="1.1" width="10.8" height="8.8" rx="2" stroke-width="1.7" fill="#1e1e20"/>
  <path d="M2.3 3.6 H10.2 M2.3 5.5 H6.8" stroke-width="0.9" stroke="#d8d8da"/>
 </g>
 <!-- premium -->
 <g transform="translate(140,127)" stroke="#a47ade" stroke-width="1.55">
  <path d="M2.4 4.6 C2.9 3.3 3.5 2.6 4.6 2.6 L11.4 2.6 A1.6 1.6 0 0 1 11.4 5.8 L5.9 5.8 A3.1 3.1 0 0 0 5.9 12 L11.4 12 A1.6 1.6 0 0 0 11.4 8.8 L5.3 8.8"/>
 </g>
 <!-- business -->
 <g transform="translate(223,128)" stroke="#e4e4e6" stroke-width="1.5">
  <rect x="1.9" y="3.9" width="11.3" height="7.2" rx="1.8"/>
  <path d="M5.6 3.8 V2.7 Q5.6 1.8 6.5 1.8 H9.7 Q10.6 1.8 10.6 2.7 V3.8"/>
  <path d="M2 6.5 H6.2 Q6.6 8 8.1 8 Q9.6 8 10 6.5 H13.2"/>
 </g>
 <!-- education -->
 <g transform="translate(308,127)" stroke="#e4e4e6" stroke-width="1.5">
  <path d="M1.4 5.5 L8.4 2.2 L15.5 5.5 L8.4 8.7 Z"/>
  <path d="M4.2 7.2 V9.8 Q4.2 11.8 8.4 11.8 Q12.6 11.8 12.6 9.8 V7.2"/>
  <path d="M8.4 5.5 Q5.2 6.3 4.8 8.4 V14.2"/>
 </g>
 <!-- creative -->
 <g transform="translate(400,124)" stroke="#e4e4e6" stroke-width="1.3">
  <path d="M6.5 15 L6.3 13 C5.9 11.3 4.7 10.1 4.7 7.6 A3.2 3.2 0 0 1 11.1 7.6 C11.1 10.1 9.9 11.3 9.5 13 L9.3 15 Z"/>
  <path d="M6.6 14.2 H9.2" stroke-width="1.6"/>
  <path d="M7.9 1.8 V2.8 M3.4 3.4 L4.1 4.1 M12.4 3.4 L11.7 4.1 M1.7 7.6 H2.7 M13.1 7.6 H14.1" stroke-width="1.5"/>
 </g>
 <!-- personal -->
 <g transform="translate(482,128)" stroke="#e4e4e6">
  <rect x="2.2" y="2.1" width="8.6" height="8.5" rx="2" stroke-width="1.5"/>
  <path d="M4.6 4.5 L7.1 7 M7.1 4.5 L4.6 7" stroke-width="1.1"/>
  <rect x="7.9" y="7.2" width="5" height="3.8" rx="0.9" fill="#e4e4e6" stroke="#2c2c2e" stroke-width="0.9"/>
  <rect x="9.3" y="8.6" width="2.2" height="1.4" fill="#666" stroke="none"/>
 </g>
 <!-- dynamic -->
 <g transform="translate(566,128)">
  <rect x="1.7" y="2.2" width="11.4" height="9.4" rx="2" stroke="#e4e4e6" stroke-width="1.4"/>
  <rect x="3.3" y="4.4" width="8.2" height="3" fill="#8c8c94"/>
  <rect x="3.3" y="7.6" width="8.2" height="1.3" fill="#f4f4f4"/>
  <rect x="3.3" y="9" width="8.2" height="1.3" fill="#9a9a9e"/>
 </g>
 <!-- minimal -->
 <g transform="translate(649,128)">
  <rect x="1.8" y="2.2" width="11.4" height="9.4" rx="2" stroke="#e4e4e6" stroke-width="1.4"/>
  <rect x="4" y="4" width="3.1" height="5.4" fill="#f4f4f4"/>
  <rect x="8.2" y="4" width="3.2" height="5.4" fill="#f4f4f4"/>
 </g>
 <!-- bold -->
 <g fill="#f0f0f0" stroke="none">
  <rect x="728.9" y="129.5" width="2.8" height="6.3" rx="1.2"/><rect x="728.9" y="136.9" width="2.8" height="2.7" rx="1.35"/>
  <rect x="732.9" y="129.5" width="2.8" height="6.3" rx="1.2"/><rect x="732.9" y="136.9" width="2.8" height="2.7" rx="1.35"/>
  <rect x="737" y="129.5" width="2.8" height="6.3" rx="1.2"/><rect x="737" y="136.9" width="2.8" height="2.7" rx="1.35"/>
 </g>
</svg>
</body></html>
